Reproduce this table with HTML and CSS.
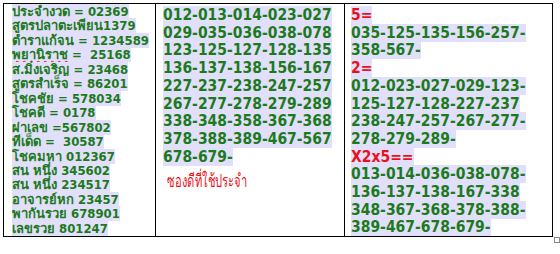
FILE: index.html
```html
<!DOCTYPE html>
<html>
<head>
<meta charset="utf-8">
<link rel="stylesheet" href="styles.css">
</head>
<body>
<div class="sheet">
  <div class="cell c1">
    <div class="ln"><span class="hl">ประจำงวด = 02369</span></div>
    <div class="ln"><span class="hl">สูตรปลาตะเพียน1379</span></div>
    <div class="ln"><span class="hl">ตำราแก้จน = 1234589</span></div>
    <div class="ln"><span class="hl"><span class="spell">พยานิราช</span> =&nbsp; 25168</span></div>
    <div class="ln"><span class="hl">ส.มิ่งเจริญ = 23468</span></div>
    <div class="ln"><span class="hl">สูตรสำเร็จ = 86201</span></div>
    <div class="ln"><span class="hl">โชคชัย = 578034</span></div>
    <div class="ln"><span class="hl">โชคดี = 0178</span></div>
    <div class="ln"><span class="hl">ผ่าเลข =567802</span></div>
    <div class="ln"><span class="hl">ทีเด็ด =&nbsp; 30587</span></div>
    <div class="ln"><span class="hl">โชคมหา 012367</span></div>
    <div class="ln"><span class="hl">สน หนึ่ง 345602</span></div>
    <div class="ln"><span class="hl">สน หนึ่ง 234517</span></div>
    <div class="ln"><span class="hl">อาจารย์หก 23457</span></div>
    <div class="ln"><span class="hl">พากันรวย 678901</span></div>
    <div class="ln"><span class="hl">เลขรวย 801247</span></div>
  </div>
  <div class="cell c2">
    <div class="big"><span class="hl">012-013-014-023-027 029-035-036-038-078 123-125-127-128-135 136-137-138-156-167 227-237-238-247-257 267-277-278-279-289 338-348-358-367-368 378-388-389-467-567 678-679-</span></div>
    <div class="note">ซองดีที่ใช้ประจำ</div>
  </div>
  <div class="cell c3">
    <div class="big"><span class="hl red">5=</span></div>
    <div class="big"><span class="hl">035-125-135-156-257-<br>358-567-</span></div>
    <div class="big"><span class="hl red">2=</span></div>
    <div class="big"><span class="hl">012-023-027-029-123-<br>125-127-128-227-237<br>238-247-257-267-277-<br>278-279-289-</span></div>
    <div class="big"><span class="hl red">X2x5==</span></div>
    <div class="big"><span class="hl">013-014-036-038-078-<br>136-137-138-167-338<br>348-367-368-378-388-<br>389-467-678-679-</span></div>
  </div>
  <div class="resize"></div>
</div>
</body>
</html>
```
FILE: styles.css
```css
html, body {
  margin: 0;
  padding: 0;
  background: #ffffff;
}
body {
  width: 560px;
  height: 254px;
  overflow: hidden;
  font-family: "DejaVu Sans Condensed", "DejaVu Sans", "Noto Sans", sans-serif;
  font-weight: bold;
  color: #1c7a1c;
}
.sheet {
  position: relative;
  margin: 3px 0 0 3px;
  width: 548px;
  height: 232px;
  border: 1px solid #000;
  display: grid;
  grid-template-columns: 151px 189px 1fr;
}
.resize {
  position: absolute;
  right: -8px;
  bottom: -7px;
  width: 4px;
  height: 4px;
  border: 1px solid #8a8a8a;
  background: #fff;
}
.cell {
  border-left: 1px solid #000;
  overflow: hidden;
}
.cell.c1 {
  border-left: none;
  padding: 1px 0 0 8px;
}
.c1 .ln {
  font-size: 13px;
  line-height: 14.45px;
  white-space: nowrap;
}
.hl {
  background: #e2dffb;
}
.red {
  color: #e8121c;
}
.spell {
  text-decoration: underline wavy #e8121c;
  text-decoration-thickness: 1px;
}
.c2 {
  padding: 3px 0 0 7px;
}
.c2 .big {
  width: 172px;
}
.big {
  font-size: 15.5px;
  line-height: 17.7px;
}
.c3 {
  padding: 3px 0 0 6px;
}
.note {
  margin-top: 4px;
  padding-left: 7px;
  font-weight: normal;
  font-size: 18px;
  line-height: 22px;
  color: #e8121c;
  white-space: nowrap;
  transform: scaleX(0.62);
  transform-origin: left center;
}
```
